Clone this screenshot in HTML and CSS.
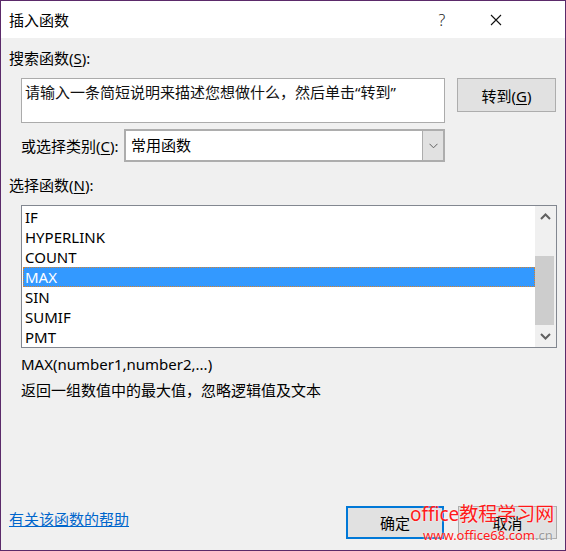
FILE: index.html
```html
<!DOCTYPE html>
<html lang="zh-CN">
<head>
    <meta charset="UTF-8">
    <title>插入函数</title>
    <link rel="stylesheet" href="styles.css">
</head>
<body>
    <div class="dialog">
        <!-- Title bar -->
        <div class="titlebar">
            <span class="title">插入函数</span>
            <span class="tb-help">?</span>
            <span class="tb-close">
                <svg width="12" height="12" viewBox="0 0 12 12"><path d="M1 1L11 11M11 1L1 11" stroke="#111" stroke-width="1.1" fill="none"/></svg>
            </span>
        </div>

        <div class="content">
            <div class="label">搜索函数(<u>S</u>):</div>
            <div class="search-row">
                <div class="search-box">请输入一条简短说明来描述您想做什么，然后单击“转到”</div>
                <button class="btn btn-go">转到(<u>G</u>)</button>
            </div>

            <div class="category-row">
                <span class="label">或选择类别(<u>C</u>):</span>
                <div class="combo">
                    <span class="combo-value">常用函数</span>
                    <span class="combo-arrow">
                        <svg width="9" height="6" viewBox="0 0 9 6"><path d="M0.5 0.8L4.5 4.8L8.5 0.8" stroke="#606060" stroke-width="1" fill="none"/></svg>
                    </span>
                </div>
            </div>

            <div class="label label-list">选择函数(<u>N</u>):</div>
            <div class="listbox">
                <ul class="func-list">
                    <li>IF</li>
                    <li>HYPERLINK</li>
                    <li>COUNT</li>
                    <li class="selected">MAX</li>
                    <li>SIN</li>
                    <li>SUMIF</li>
                    <li>PMT</li>
                </ul>
                <div class="scrollbar">
                    <span class="sb-arrow">
                        <svg width="11" height="7" viewBox="0 0 11 7"><path d="M1 6L5.5 1.5L10 6" stroke="#606060" stroke-width="2" fill="none"/></svg>
                    </span>
                    <div class="sb-track"><div class="sb-thumb"></div></div>
                    <span class="sb-arrow">
                        <svg width="11" height="7" viewBox="0 0 11 7"><path d="M1 1L5.5 5.5L10 1" stroke="#606060" stroke-width="2" fill="none"/></svg>
                    </span>
                </div>
            </div>

            <div class="syntax">MAX(number1,number2,...)</div>
            <div class="desc">返回一组数值中的最大值，忽略逻辑值及文本</div>
        </div>

        <div class="footer">
            <a href="#" class="help-link">有关该函数的帮助</a>
            <div class="buttons">
                <button class="btn btn-ok">确定</button>
                <button class="btn btn-cancel">取消</button>
            </div>
        </div>

        <!-- site watermark over the buttons -->
        <div class="watermark">
            <div class="wm-big">office教程学习网</div>
            <div class="wm-small">www.office68.com<span class="wm-cn">.cn</span></div>
        </div>
    </div>
</body>
</html>
```

FILE: styles.css
```css
body {
    margin: 0;
    padding: 0;
    background-color: #f0f0f0;
    font-family: "Noto Sans", "Noto Sans CJK SC", sans-serif;
    font-size: 15px;
    line-height: 20px;
    color: #000;
}
.dialog {
    position: relative;
    width: 566px;
    height: 551px;
    box-sizing: border-box;
    border: 1px solid #5b2a6a;
    background-color: #f0f0f0;
    display: flex;
    flex-direction: column;
}
.titlebar {
    height: 37px;
    background-color: #fff;
    display: flex;
    align-items: center;
    padding-left: 8px;
}
.title {
    flex: 1;
    font-size: 15px;
}
.tb-help {
    width: 54px;
    text-align: center;
    font-size: 16px;
    color: #222;
    font-family: "Noto Sans", sans-serif;
    font-weight: 300;
}
.tb-close {
    width: 54px;
    margin-right: 42px;
    display: flex;
    justify-content: center;
}
.content {
    padding: 10px 8px 0 8px;
}
u {
    text-decoration: underline;
    text-underline-offset: 2px;
}
.search-row {
    display: flex;
    align-items: flex-start;
    margin-top: 10px;
    padding-left: 12px;
}
.search-box {
    width: 424px;
    height: 45px;
    box-sizing: border-box;
    background-color: #fff;
    border: 1px solid #ababab;
    padding: 3px 3px;
    color: #111;
}
.btn {
    font-family: "Noto Sans", "Noto Sans CJK SC", sans-serif;
    font-size: 15px;
    color: #000;
    background-color: #e1e1e1;
    border: 1px solid #adadad;
    box-sizing: border-box;
    padding: 0;
}
.btn-go {
    width: 99px;
    height: 34px;
    margin-left: 12px;
}
.category-row {
    display: flex;
    align-items: center;
    margin-top: 6px;
    padding-left: 12px;
}
.category-row .label {
    width: 103px;
}
.combo {
    width: 321px;
    height: 33px;
    box-sizing: border-box;
    border: 2px solid #adadad;
    background-color: #fff;
    display: flex;
}
.combo-value {
    flex: 1;
    padding-left: 5px;
    line-height: 29px;
}
.combo-arrow {
    width: 20px;
    background-color: #e1e1e1;
    border-left: 1px solid #adadad;
    display: flex;
    align-items: center;
    justify-content: center;
}
.label-list {
    margin-top: 13px;
}
.listbox {
    margin: 10px 0 0 12px;
    width: 536px;
    height: 143px;
    box-sizing: border-box;
    border: 1px solid #828790;
    background-color: #fff;
    display: flex;
}
.func-list {
    list-style-type: none;
    margin: 0;
    padding: 1px 0 0 1px;
    flex: 1;
}
.func-list li {
    height: 20px;
    line-height: 20px;
    padding-left: 2px;
    box-sizing: border-box;
}
.func-list li.selected {
    background-color: #3399ff;
    color: #fff;
    border: 1px dotted #d9822b;
    padding-left: 1px;
    line-height: 18px;
}
.scrollbar {
    width: 21px;
    background-color: #f0f0f0;
    display: flex;
    flex-direction: column;
}
.sb-arrow {
    height: 21px;
    display: flex;
    align-items: center;
    justify-content: center;
}
.sb-track {
    flex: 1;
    padding-top: 29px;
}
.sb-thumb {
    width: 19px;
    height: 69px;
    background-color: #cdcdcd;
}
.syntax {
    margin-top: 6px;
    padding-left: 12px;
}
.desc {
    margin-top: 6px;
    padding-left: 12px;
}
.footer {
    margin-top: auto;
    display: flex;
    align-items: center;
    justify-content: space-between;
    padding: 0 8px 11px 8px;
}
.help-link {
    color: #0066cc;
    text-decoration: underline;
    margin-top: -8px;
}
.buttons {
    display: flex;
    gap: 14px;
}
.btn-ok {
    width: 98px;
    height: 33px;
    border: 2px solid #0078d7;
}
.btn-cancel {
    width: 99px;
    height: 33px;
}
.watermark {
    position: absolute;
    left: 409px;
    top: 501px;
    color: #ff1a1a;
    white-space: nowrap;
    font-family: "Noto Sans", "Noto Sans CJK SC", sans-serif;
    text-shadow: 0 0 2px #fff;
}
.wm-big {
    font-size: 19px;
    line-height: 24px;
}
.wm-small {
    font-size: 13px;
    line-height: 14px;
    margin-left: 13px;
    margin-top: 2px;
}
.wm-cn {
    color: #9a9a9a;
}
```
